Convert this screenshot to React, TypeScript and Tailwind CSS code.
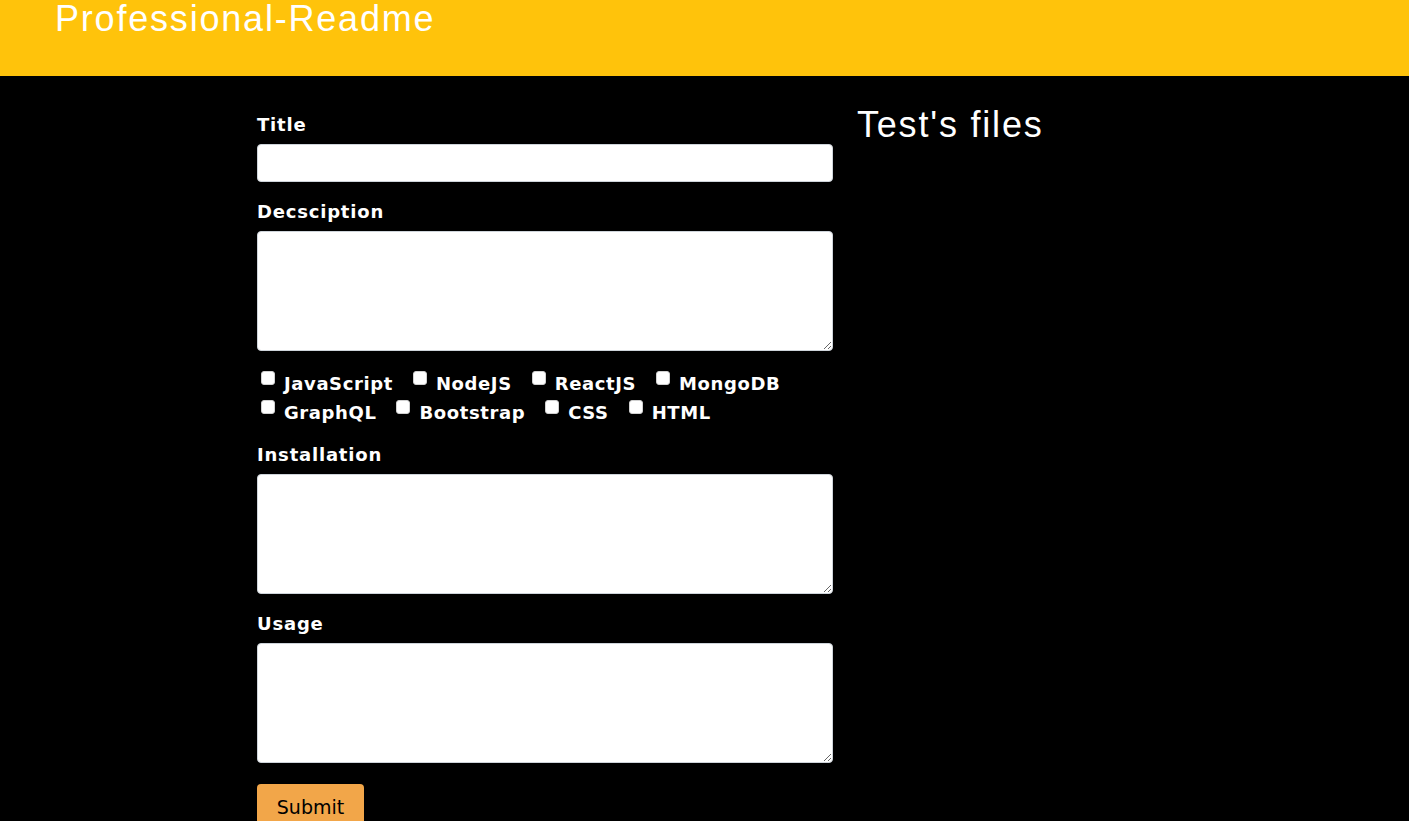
import React from 'react';

const techs1 = ['JavaScript', 'NodeJS', 'ReactJS', 'MongoDB'];
const techs2 = ['GraphQL', 'Bootstrap', 'CSS', 'HTML'];

const Check = ({ name }: { name: string }) => (
  <label className="flex items-start mr-[16px]">
    <input
      type="checkbox"
      className="appearance-none w-[14px] h-[14px] mt-[2px] ml-[4px] mr-[9px] bg-white rounded-[3px] border border-[#d0d0d0]"
    />
    <span>{name}</span>
  </label>
);

const App = () => {
  return (
    <div className="min-h-[821px] bg-black font-['Comic_Sans_MS','DejaVu_Sans',sans-serif]">
      <header className="h-[76px] bg-[#ffc30b] pl-[55px]">
        <h1 className="font-['Liberation_Sans',Arial,sans-serif] text-[36px] leading-[38px] text-white tracking-[1.8px]">
          Professional-Readme
        </h1>
      </header>
      <main className="flex pl-[257px] pt-[37px]">
        <form className="w-[576px] text-white font-bold text-[18px] tracking-[0.8px]">
          <label className="block leading-[24px] mb-[7px]">Title</label>
          <input className="block w-full h-[38px] bg-white rounded-[4px] border border-[#ced4da]" />
          <label className="block leading-[24px] mt-[18px] mb-[7px]">Decsciption</label>
          <textarea className="block w-full h-[120px] bg-white rounded-[4px] border border-[#ced4da]" />
          <div className="mt-[18px] leading-[29px] tracking-[0.6px]">
            <div className="flex">
              {techs1.map((t) => (
                <Check key={t} name={t} />
              ))}
            </div>
            <div className="flex">
              {techs2.map((t) => (
                <Check key={t} name={t} />
              ))}
            </div>
          </div>
          <label className="block leading-[24px] mt-[16px] mb-[7px]">Installation</label>
          <textarea className="block w-full h-[120px] bg-white rounded-[4px] border border-[#ced4da]" />
          <label className="block leading-[24px] mt-[18px] mb-[7px]">Usage</label>
          <textarea className="block w-full h-[120px] bg-white rounded-[4px] border border-[#ced4da]" />
          <button
            type="button"
            className="mt-[21px] w-[107px] h-[48px] rounded-[4px] bg-[#f2a649] text-black font-normal tracking-normal text-[19px] pb-[2px]"
          >
            Submit
          </button>
        </form>
        <div className="ml-[24px] -mt-[8px]">
          <h2 className="font-['Liberation_Sans',Arial,sans-serif] text-[36px] leading-[40px] text-white tracking-[1.8px]">
            Test's files
          </h2>
        </div>
      </main>
    </div>
  );
};

export default App;
